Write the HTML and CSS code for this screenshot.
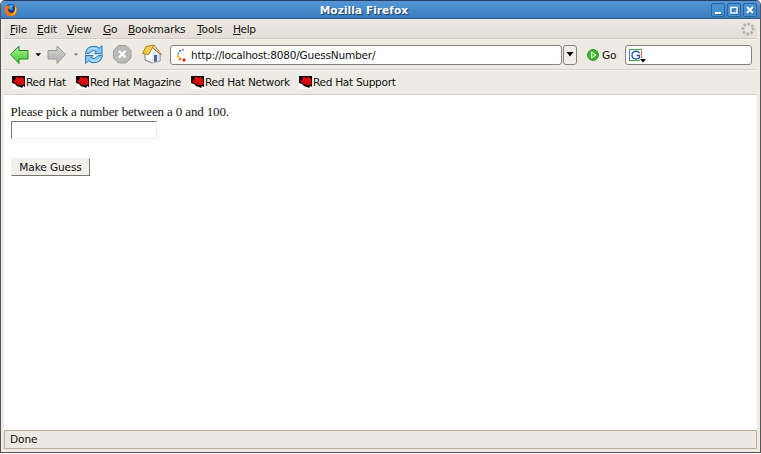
FILE: index.html
```
<!DOCTYPE html>
<html lang="en">
<head>
<meta charset="utf-8">
<title>Mozilla Firefox</title>
<link rel="stylesheet" href="styles.css">
</head>
<body>
<svg width="0" height="0" class="defs">
  <defs>
    <linearGradient id="green" x1="0" y1="0" x2="0" y2="1"><stop offset="0" stop-color="#b5f29a"/><stop offset="1" stop-color="#35c92c"/></linearGradient>
    <linearGradient id="grey" x1="0" y1="0" x2="0" y2="1"><stop offset="0" stop-color="#d6d6d4"/><stop offset="1" stop-color="#adadab"/></linearGradient>
    <symbol id="redhat" viewBox="0 0 13 13">
      <path d="M0 0h13v13H0z" fill="#fff"/>
      <path d="M0 0h13v11l-2-1-1 2-2-1-3-1-2-2-3-1z" fill="#050505"/>
      <path d="M4 1l2 0 1 1 3-1 2 2 0 3 1 2-2 1-4 0-4-2-2-2 2-1z" fill="#e00b0b"/>
      <path d="M1 5l2-.5L6 7l4 .5" fill="none" stroke="#8b0505" stroke-width=".7"/>
      <path d="M5 10.500l2 .5M10 11l1 1" stroke="#a88" stroke-width=".8"/>
    </symbol>
  </defs>
</svg>
<div class="window">
  <header class="titlebar">
    <svg class="fox" width="14" height="14" viewBox="0 0 14 14">
      <circle cx="7" cy="7" r="6" fill="#173b80"/>
      <path d="M4 3Q7 0 10 3L8 5 9 7 6 7z" fill="#4b9bd8"/>
      <path d="M1 2Q2 3 4 3L6 5 4 6Q4 10 8 10 11 9 11 5L10 2Q14 4 13 8 12 13 7 13.5 1 13 .7 7 .5 4 1 2z" fill="#ee7414"/>
      <path d="M11 3q2 3 1 6-2 4-6 3 4 0 5-4z" fill="#ffd04c"/>
    </svg>
    <h1>Mozilla Firefox</h1>
    <div class="controls">
      <span><svg width="12" height="12"><path d="M3 9h6" stroke="#fff" stroke-width="2"/></svg></span>
      <span><svg width="12" height="12"><path d="M3 3.5h6V9H3z" fill="none" stroke="#fff" stroke-width="1.4"/></svg></span>
      <span><svg width="12" height="12"><path d="M3 3l6 6M9 3L3 9" stroke="#fff" stroke-width="2"/></svg></span>
    </div>
  </header>
  <div class="chrome">
    <nav class="menubar">
      <span><u>F</u>ile</span><span><u>E</u>dit</span><span><u>V</u>iew</span><span><u>G</u>o</span><span><u>B</u>ookmarks</span><span><u>T</u>ools</span><span><u>H</u>elp</span>
      <svg class="throbber" width="14" height="14" viewBox="0 0 14 14"><circle cx="7" cy="7" r="5.1" fill="none" stroke="#b5b3ae" stroke-width="3" stroke-linecap="round" stroke-dasharray=".1 3.905"/></svg>
    </nav>
    <div class="toolbar">
      <svg class="nav-icons" width="162" height="28" viewBox="0 0 162 28">
        <path d="M6.500 13.500L15 5v4.500h9V18h-9v4.500z" fill="url(#green)" stroke="#27852a"/>
        <path d="M32 12.500h4.500L34.250 15z" stroke="#000" stroke-width=".5"/>
        <path d="M61.500 13.500L53 5v4.500h-9V18h9v4.500z" fill="url(#grey)" stroke="#989896"/>
        <path d="M70 12.500h4L72 15z" fill="#777"/>
        <g transform="translate(0 -1)">
        <path d="M81.500 14q0-6 6-7.500 5-1 8 1.500l2.500-2.300v8h-7.500l2-2q-4-2.500-6.500 1.300z" fill="#87c7f7" stroke="#2878c0"/>
        <path d="M98.500 15q-.5 6-6 7.500-5 1-8-1.500L81.500 23.500v-8H89l-2 2q4 2.500 6.500-1.500z" fill="#87c7f7" stroke="#2878c0"/>
        <path d="M84 11q3-4.500 9-2M96 18q-3 4.500-9 2" fill="none" stroke="#c9eaff"/>
        <path d="M114.500 5.500h7.500l5 5v7.500l-5 5h-7.500l-5-5v-7.500z" fill="#b9b9b7" stroke="#a0a09e"/>
        <path d="M115 11l6.500 6.500M121.500 11L115 17.500" stroke="#fff" stroke-width="2.400"/>
        <path d="M141 13l7-6 8 7v7l-8 2-7-3z" fill="#f5f7fa" stroke="#777b83"/>
        <path d="M148.500 10l7 5v6l-7 2z" fill="#dbe8f5"/>
        <path d="M150 15h3v6.500l-3 .5z" fill="#526b8c"/>
        <path d="M138.500 13.500L142 6.500l8-1.500-5.500 9.500z" fill="#f8cd48" stroke="#b0801c"/>
        <path d="M150 5l7.500 9.500M149 8l8 7" stroke="#b0801c"/>
        </g>
      </svg>
      <div class="address">
        <svg width="14" height="14" viewBox="0 0 14 14"><circle cx="8" cy="2" r="1" fill="#a16dc0"/><circle cx="5" cy="3" r="1.100" fill="#4965bb"/><circle cx="3.400" cy="5.500" r="1.100" fill="#25a7c5"/><circle cx="3" cy="8.300" r="1.200" fill="#e7bd16"/><circle cx="5" cy="11" r="1.400" fill="#ef7c13"/><circle cx="9" cy="12" r="1.600" fill="#d9140c"/></svg>
        <span>http://localhost:8080/GuessNumber/</span>
      </div>
      <div class="drop"><svg width="8" height="5"><path d="M.5 0h7L4 4.500z"/></svg></div>
      <svg class="go-icon" width="12" height="12" viewBox="0 0 12 12"><circle cx="6" cy="6" r="5.400" fill="#35bc28" stroke="#268e20"/><path d="M4.500 3v6L9 6z" fill="#60ce50" stroke="#fff"/></svg>
      <span class="go">Go</span>
      <div class="search">
        <svg width="18" height="16" viewBox="0 0 18 16"><path d="M.5 1v12" stroke="#4472e2"/><path d="M1 1.500h12M1 12.500h10" stroke="#48ae42"/><path d="M12.500 2v8" stroke="#e56b60"/><path d="M10.500 5Q9 3.200 7 3.200 3 3.500 3 7q0 4 4 4 2 0 3.500-1V7.500H7.500" fill="none" stroke="#2649b1" stroke-width="1.300"/><path d="M11 11h6l-3 3.500z"/></svg>
      </div>
    </div>
    <div class="bookmarks">
      <span><svg width="13" height="13"><use href="#redhat"/></svg>Red Hat</span>
      <span><svg width="13" height="13"><use href="#redhat"/></svg>Red Hat Magazine</span>
      <span><svg width="13" height="13"><use href="#redhat"/></svg>Red Hat Network</span>
      <span><svg width="13" height="13"><use href="#redhat"/></svg>Red Hat Support</span>
    </div>
    <main class="page">
      <p>Please pick a number between a 0 and 100.</p>
      <input class="guess" type="text" aria-label="Guess">
      <button class="submit">Make Guess</button>
    </main>
    <footer class="status">Done</footer>
  </div>
</div>
</body>
</html>
```
FILE: styles.css
```
* { box-sizing: border-box; }
body { margin: 0; overflow: hidden; background: #fff; font: 10.6px "DejaVu Sans", sans-serif; letter-spacing: -.13px; color: #111; }
svg { display: block; flex: none; }
.defs { position: absolute; }
.window { width: 761px; height: 453px; background: #eeebe5; border: 1px solid #545454; border-top-color: #234064; border-radius: 5px 5px 0 0; overflow: hidden; }
.titlebar { height: 18px; display: grid; grid-template-columns: 54px 1fr 54px; align-items: center; background: linear-gradient(#5795d4, #438acb 55%, #3e7fbb); border-bottom: 1px solid #285988; }
.fox { margin-left: 3px; }
h1 { margin: 1px 0 0 -33px; font-size: 10.6px; line-height: 17px; text-align: center; letter-spacing: .05px; color: #fff; text-shadow: 1px 1px 1px #173a60; }
.controls { display: flex; gap: 2px; margin-left: 5px; }
.controls span { width: 14px; height: 14px; border: 1px solid #28659e; border-radius: 2px; background: #4a8fd0; }
.controls svg { filter: drop-shadow(1px 1px 0 #28649c); }
.chrome { margin: 0 3px; }
.menubar { height: 20px; display: grid; grid-template-columns: 27px 30px 36px 25px 69px 36px 1fr 14px; align-items: center; padding: 2px 2px 0 6px; line-height: 17px; background: linear-gradient(#ece8e3, #e4dfd8); border-bottom: 1px solid #d1c9bd; }
.menubar span:nth-child(5) { letter-spacing: -.2px; }
.menubar span:nth-child(7) { letter-spacing: -.4px; }
.menubar u { text-underline-offset: 1px; text-decoration-thickness: 1px; }
.throbber { margin-top: -2px; }
.toolbar { height: 31px; display: flex; align-items: center; border-bottom: 1px solid #d6d2cb; border-top: 1px solid #f5f3ef; }
.nav-icons { margin-right: 4px; }
.address { width: 392px; height: 20px; display: flex; align-items: center; gap: 2px; padding-left: 4px; background: #fff; border: 1px solid #87817a; border-radius: 3px; }
.address span { letter-spacing: -.25px; }
.drop { width: 14px; height: 20px; margin-left: 1px; display: grid; place-items: center; background: #f2efea; border: 1px solid #87817a; border-radius: 3px; }
.go-icon { margin-left: 10px; }
.go { width: 19px; margin: 0 4px 0 3px; }
.search { width: 127px; height: 20px; padding: 2px 0 0 3px; background: #fff; border: 1px solid #87817a; border-radius: 3px; }
.bookmarks { height: 25px; display: grid; grid-template-columns: 64px 115px 108px 1fr; align-items: center; padding-left: 8px; border-top: 1px solid #f9f7f4; border-bottom: 1px solid #d5d1ca; }
.bookmarks span { display: flex; align-items: center; gap: 1px; white-space: nowrap; line-height: 13px; letter-spacing: -.32px; }
.page { height: 335px; padding: 9px 7px; background: #fff; }
.page p { margin: 0 0 0 -.5px; font: 13px/16px "Liberation Serif", serif; letter-spacing: -.14px; }
.guess { display: block; width: 146px; height: 18px; margin-top: 1px; padding: 0 2px; border: 1px solid #eee; border-top: 1px solid #777; border-left: 1px solid #777; background: #fff; }
.submit { display: block; width: 79px; height: 18px; margin: 19px 0 0; padding: 0; font: 10.6px "DejaVu Sans", sans-serif; letter-spacing: -.13px; color: #111; background: #f2f0eb; border: 1px solid #f3f1ed; border-right: 1px solid #77736d; border-bottom: 1px solid #77736d; }
.status { height: 19px; padding-left: 5px; line-height: 17px; background: #ece9e2; border: 1px solid #b9ad9b; }
```
